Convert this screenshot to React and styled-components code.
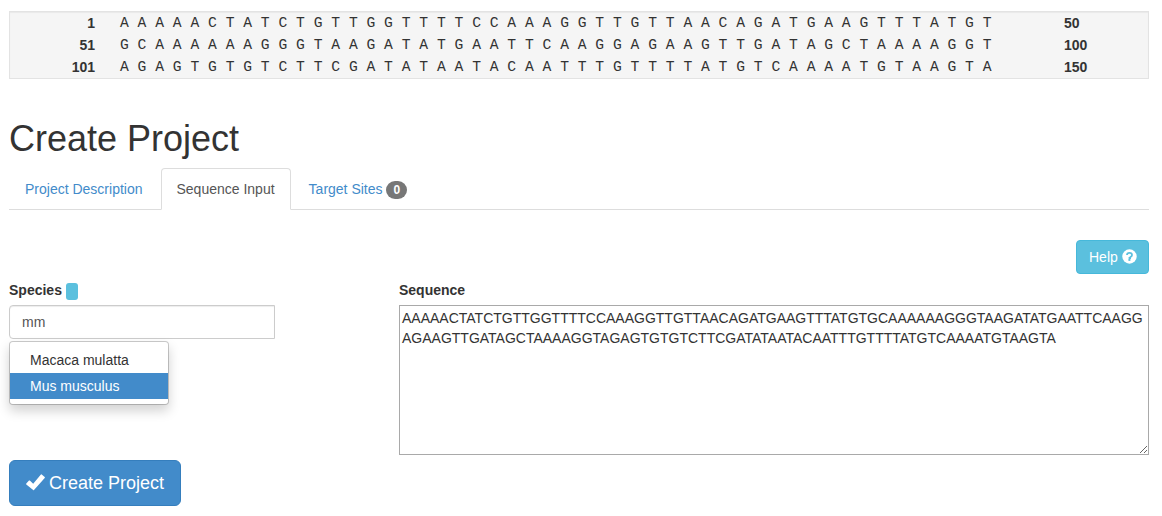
import React from "react";
import styled, { createGlobalStyle } from "styled-components";

const GlobalStyle = createGlobalStyle`
  *, *::before, *::after { box-sizing: border-box; }
  body {
    margin: 0;
    background: #fff;
    color: #333;
    font: 14px/20px "Liberation Sans", Arial, sans-serif;
  }
`;

const Page = styled.main`
  width: 1140px;
  margin: 11px 0 0 9px;
`;

const SequencePanel = styled.section`
  height: 68px;
  background: #f5f5f5;
  border: 1px solid #e3e3e3;
  box-shadow: inset 0 1px 1px rgba(0, 0, 0, 0.05);
`;

const SequenceRow = styled.div`
  display: grid;
  grid-template-columns: 85px 919px 1fr;
  column-gap: 25px;
  height: 22px;
  line-height: 22px;
`;

const Position = styled.strong`
  text-align: ${(p) => p.$align || "left"};
`;

const Bases = styled.span`
  font: 14.667px/22px "Liberation Mono", "Courier New", monospace;
  letter-spacing: 0.008px;
  white-space: pre;
`;

const Title = styled.h1`
  margin: 40px 0 9px;
  font-size: 36px;
  font-weight: 400;
  line-height: 40px;
`;

const Tabs = styled.nav`
  display: flex;
  gap: 2px;
  height: 42px;
  border-bottom: 1px solid #ddd;
`;

const Tab = styled.a`
  height: 42px;
  padding: 10px 15px;
  border: 1px solid ${(p) => (p.$active ? "#ddd" : "transparent")};
  border-bottom-color: ${(p) => (p.$active ? "#fff" : "transparent")};
  border-radius: 4px 4px 0 0;
  color: ${(p) => (p.$active ? "#555" : "#428bca")};
  background: ${(p) => (p.$active ? "#fff" : "transparent")};
  white-space: nowrap;
`;

const Badge = styled.span`
  display: inline-block;
  min-width: 10px;
  padding: 3px 7px;
  border-radius: 10px;
  background: #777;
  color: #fff;
  font-size: 12px;
  font-weight: 700;
  line-height: 12px;
  vertical-align: baseline;
`;

const Toolbar = styled.div`
  display: flex;
  justify-content: flex-end;
  margin-top: 30px;
`;

const Button = styled.button`
  display: inline-flex;
  align-items: center;
  gap: 4px;
  width: ${(p) => (p.$large ? "172px" : "73px")};
  height: ${(p) => (p.$large ? "46px" : "34px")};
  padding: 0 ${(p) => (p.$large ? "16px" : "12px")};
  border: 1px solid ${(p) => (p.$large ? "#357ebd" : "#46b8da")};
  border-radius: ${(p) => (p.$large ? "6px" : "4px")};
  background: ${(p) => (p.$large ? "#428bca" : "#5bc0de")};
  color: #fff;
  font: ${(p) => (p.$large ? "18px" : "14px")} "Liberation Sans", Arial, sans-serif;
  white-space: nowrap;

  svg {
    flex: none;
    margin-bottom: 2px;
  }
`;

const Form = styled.form`
  display: grid;
  grid-template-columns: 266px 750px;
  column-gap: 124px;
  margin-top: 6px;
`;

const Field = styled.div`
  position: relative;
  height: 175px;
`;

const Label = styled.label`
  display: flex;
  align-items: center;
  gap: 4px;
  height: 20px;
  margin-bottom: 5px;
  font-weight: 700;
`;

const Marker = styled.span`
  width: 12px;
  height: 17px;
  margin-top: 3px;
  border-radius: 3px;
  background: #5bc0de;
`;

const TextInput = styled.input`
  display: block;
  width: 266px;
  height: 34px;
  padding: 6px 12px;
  border: 1px solid #ccc;
  border-radius: 4px 0 0 4px;
  box-shadow: inset 0 1px 1px rgba(0, 0, 0, 0.075);
  color: #555;
  font: inherit;
  outline: none;
`;

const Menu = styled.ul`
  position: absolute;
  top: 61px;
  left: 0;
  width: 160px;
  height: 64px;
  margin: 0;
  padding: 5px 0;
  border: 1px solid rgba(0, 0, 0, 0.2);
  border-radius: 4px;
  background: #fff;
  background-clip: padding-box;
  box-shadow: 0 6px 12px rgba(0, 0, 0, 0.175);
  list-style: none;
`;

const MenuItem = styled.li`
  padding: 3px 20px;
  color: ${(p) => (p.$active ? "#fff" : "#333")};
  background: ${(p) => (p.$active ? "#428bca" : "transparent")};
`;

const SequenceArea = styled.textarea`
  display: block;
  width: 750px;
  height: 150px;
  padding: 2px;
  border: 1px solid #a9a9a9;
  border-radius: 0;
  color: #333;
  font: inherit;
  overflow: auto;
  outline: none;
`;

const Actions = styled.div`
  display: flex;
  margin-top: 5px;
`;

const CheckIcon = () => (
  <svg width="19" height="18" viewBox="0 0 19 18" fill="#fff" aria-hidden="true">
    <path d="M.3 10.6 3 7.6q.4-.4.8 0l3.4 3.1L14.9 1.5q.4-.4.8 0l3 2.6q.4.4 0 .8L8 17q-.4.4-.8 0L.3 11.4q-.4-.4 0-.8Z" />
  </svg>
);

const HelpIcon = () => (
  <svg width="15" height="15" viewBox="0 0 15 15" aria-hidden="true">
    <circle cx="7.5" cy="7.5" r="7.2" fill="#fff" />
    <path d="M5 6Q5 3.9 7.5 3.9T10 5.9Q10 7.1 8.8 7.7 8.1 8.1 8.1 9H6.6" fill="none" stroke="#5bc0de" strokeWidth="1.8" />
    <path d="M6.4 10h2v1.9h-2Z" fill="#5bc0de" />
  </svg>
);

const lines = [
  "AAAAACTATCTGTTGGTTTTCCAAAGGTTGTTAACAGATGAAGTTTATGT",
  "GCAAAAAAGGGTAAGATATGAATTCAAGGAGAAGTTGATAGCTAAAAGGT",
  "AGAGTGTGTCTTCGATATAATACAATTTGTTTTATGTCAAAATGTAAGTA",
];

export default function App() {
  return (
    <Page>
      <GlobalStyle />
      <SequencePanel>
        {lines.map((line, i) => (
          <SequenceRow key={i}>
            <Position $align="right">{i * 50 + 1}</Position>
            <Bases>{line.split("").join(" ")}</Bases>
            <Position>{(i + 1) * 50}</Position>
          </SequenceRow>
        ))}
      </SequencePanel>
      <Title>Create Project</Title>
      <Tabs>
        <Tab>Project Description</Tab>
        <Tab $active>Sequence Input</Tab>
        <Tab>
          Target Sites <Badge>0</Badge>
        </Tab>
      </Tabs>
      <Toolbar>
        <Button type="button">
          Help <HelpIcon />
        </Button>
      </Toolbar>
      <Form>
        <Field>
          <Label htmlFor="species">
            Species <Marker />
          </Label>
          <TextInput id="species" defaultValue="mm" />
          <Menu>
            <MenuItem>Macaca mulatta</MenuItem>
            <MenuItem $active>Mus musculus</MenuItem>
          </Menu>
        </Field>
        <Field>
          <Label htmlFor="sequence">Sequence</Label>
          <SequenceArea id="sequence" spellCheck={false} defaultValue={lines.join("")} />
        </Field>
      </Form>
      <Actions>
        <Button $large type="button">
          <CheckIcon /> Create Project
        </Button>
      </Actions>
    </Page>
  );
}
